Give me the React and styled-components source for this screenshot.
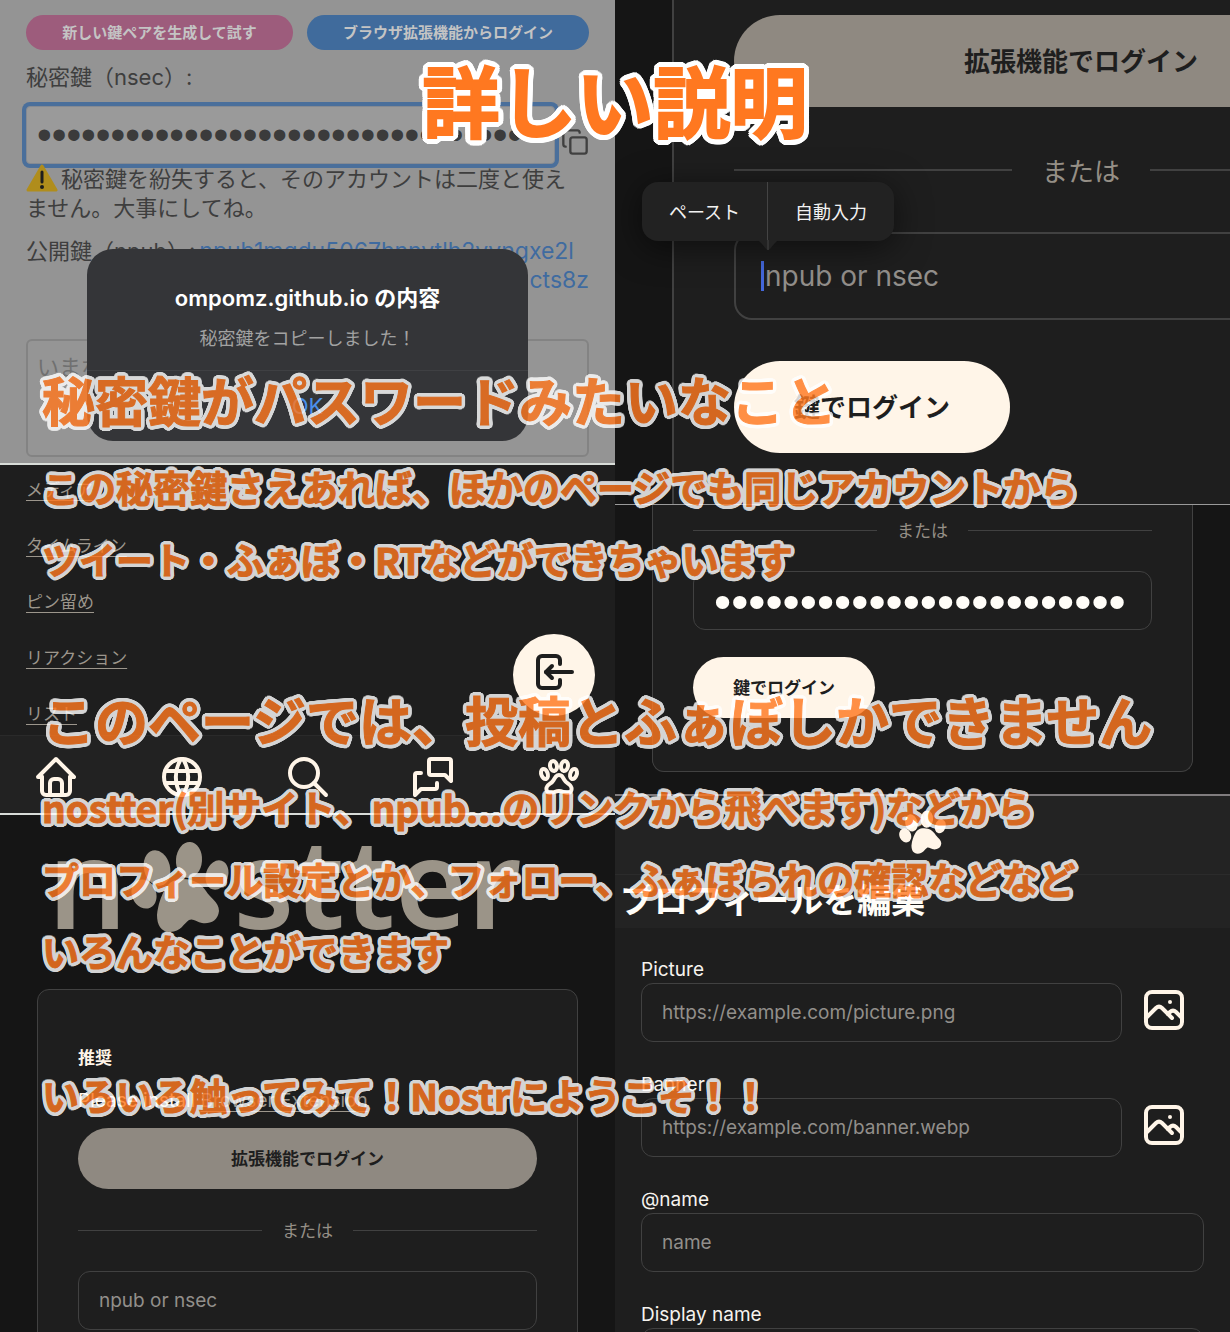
import React from "react";
import styled, { createGlobalStyle, css } from "styled-components";
import { Copy } from "lucide-react";
import { TbHome, TbWorld, TbSearch, TbMessages, TbPaw, TbLogin, TbPhoto } from "react-icons/tb";

const jp = `"Noto Sans CJK JP", sans-serif`;
const ui = `Inter, "Noto Sans CJK JP", sans-serif`;
const cream = "#fff5e8";
const ink = "#1e1e1e";
const line = "#414141";

/* White outline with rounded corners: copies of the glyph set around a circle */
const outline = (radius) =>
  Array.from({ length: 24 }, (_, i) => {
    const a = (i * Math.PI) / 12;
    return `${(Math.cos(a) * radius).toFixed(2)}px ${(Math.sin(a) * radius).toFixed(2)}px 0 #fff`;
  }).join(", ");

const GlobalStyle = createGlobalStyle`
  *, *::before, *::after { box-sizing: border-box; }
  body { margin: 0; background: #151515; font-family: ${ui}; }
  button, input, textarea { font-family: inherit; margin: 0; }
  h1, h2, p { margin: 0; }
`;

const Page = styled.main`
  position: relative;
  display: grid;
  grid-template-columns: minmax(0, 1fr) minmax(0, 1fr);
  height: 100vh;
  overflow: hidden;
`;

const Column = styled.div`
  display: flex;
  flex-direction: column;
  min-height: 0;
`;

const Panel = styled.section`
  position: relative;
  flex: ${(p) => (p.$fill ? "1 1 0" : "none")};
  min-height: 0;
  overflow: hidden;
  background: ${(p) => p.$bg || "#151515"};
  border-bottom: ${(p) => (p.$rule ? `${p.$rule}px solid ${p.$ruleColor || "#d8dcd8"}` : 0)};
`;

/* Key generation screen */

const KeyBody = styled.div`
  display: flex;
  flex-direction: column;
  padding: 15px 26px 6px;
  color: #3e3e3e;
  font: 400 22px/29px ${ui};
`;

const ButtonRow = styled.div`
  display: flex;
  gap: 14px;
`;

const PillButton = styled.button`
  flex: ${(p) => p.$grow} 1 0;
  height: 35px;
  padding: 0 0 2px;
  border: 0;
  border-radius: 18px;
  background: ${(p) => p.$bg};
  color: #c4c4c4;
  font: 700 15px/20px ${jp};
  white-space: nowrap;
`;

const KeyLabel = styled.label`
  padding: 13px 0 14px;
`;

const KeyRow = styled.div`
  display: flex;
  align-items: flex-end;
  gap: 6px;
`;

const KeyInput = styled.input`
  flex: 1;
  min-width: 0;
  height: 58px;
  padding: 0 10px;
  border: 1px solid #858a92;
  border-radius: 4px;
  outline: 0;
  background: #9a9a9a;
  box-shadow: 0 0 0 4px #4a6f9b;
  color: #3b3b3b;
  font: 400 42px/50px "Liberation Sans", sans-serif;
`;

const IconButton = styled.button`
  display: flex;
  align-items: center;
  justify-content: center;
  padding: 0;
  border: 0;
  background: none;
  color: ${cream};
`;

const CopyButton = styled(IconButton)`
  padding-bottom: 8px;
  color: #404040;
`;

const Warning = styled.p`
  padding: 0 8px 14px 0;
`;

const WarnIcon = styled.svg`
  width: 32px;
  height: 28px;
  margin-right: 3px;
  vertical-align: -5px;
`;

const PubRow = styled.p`
  display: flex;
  gap: 4px;
  white-space: nowrap;
`;

const PubLink = styled.a`
  flex: 1;
  display: flex;
  flex-direction: column;
  color: #3f6ba0;
  font-size: 23px;
  text-decoration: none;
`;

const PubTail = styled.span`
  align-self: flex-end;
`;

const PostBox = styled.textarea`
  height: 118px;
  margin-top: 44px;
  padding: 10px 9px;
  border: 2px solid #838383;
  border-radius: 6px;
  background: #959595;
  resize: none;
  font: 400 22px/29px ${jp};
  &::placeholder { color: #707070; opacity: 1; }
`;

const Dialog = styled.div`
  position: absolute;
  left: 87px;
  right: 87px;
  top: 249px;
  height: 192px;
  display: flex;
  flex-direction: column;
  border-radius: 26px;
  background: #343538;
  text-align: center;
`;

const DialogTitle = styled.h2`
  padding: 34px 0 10px;
  color: #fff;
  font: 600 22px/30px ${ui};
`;

const DialogText = styled.p`
  padding-bottom: 19px;
  color: #a2a2a2;
  font: 400 18px/28px ${jp};
`;

const DialogButton = styled.button`
  flex: 1;
  border: 0;
  border-top: 1px solid #3f4043;
  background: none;
  color: #4b8fea;
  font: 400 22px/30px ${ui};
`;

/* Profile menu screen */

const LinkList = styled.nav`
  display: flex;
  flex-direction: column;
  align-items: flex-start;
  gap: 30px;
  height: 270px;
  padding: 11px 26px 0;
`;

const MenuLink = styled.a`
  flex: none;
  color: #9c968c;
  font: 400 17px/26px ${jp};
  text-decoration: underline;
  text-decoration-thickness: 1px;
  text-underline-offset: 4px;
`;

const TabBar = styled.nav`
  display: flex;
  justify-content: space-between;
  align-items: center;
  height: 78px;
  padding: 4px 32px 0;
  border-top: 1px solid #2a2a2a;
  background: #222;
`;

const LoginFab = styled.button`
  position: absolute;
  right: 20px;
  bottom: 97px;
  width: 82px;
  height: 82px;
  display: flex;
  align-items: center;
  justify-content: center;
  padding: 0 0 6px;
  border: 0;
  border-radius: 50%;
  background: ${cream};
  color: ${ink};
`;

/* Login screens: "lg" is the zoomed-in view of the same card */

const Logo = styled.div`
  display: flex;
  align-items: flex-end;
  height: 120px;
  padding-left: 48px;
  color: #9b9488;
  font: 600 124px/108px "Noto Sans", sans-serif;
`;

const LogoPaw = styled.svg`
  width: 104px;
  height: 94px;
  margin-left: 2px;
`;

const LoginSpace = styled.div`
  padding: ${(p) => (p.$tail ? "0 0 22px" : "54px 0 0")};
`;

const Card = styled.div`
  display: flex;
  flex-direction: column;
  align-items: stretch;
  background: ${ink};
  border: 1px solid ${line};
  ${(p) =>
    p.$size === "lg"
      ? css`
          width: 133%;
          margin-left: 57px;
          padding: 15px 60px 51px;
          border-width: 0 2px;
        `
      : css`
          margin: 0 37px;
          padding: ${p.$open ? "5px 40px 53px" : "53px 40px"};
          border-radius: ${p.$open ? "0 0 12px 12px" : "12px"};
          border-top-width: ${p.$open ? 0 : "1px"};
        `}
`;

const CardHeading = styled.h2`
  color: ${cream};
  font: 700 17px/28px ${jp};
`;

const CardHint = styled.p`
  padding: 16px 0 13px;
  color: ${cream};
  font: 400 19px/28px ${ui};
  white-space: nowrap;
`;

const HintLink = styled.a`
  color: #9c968c;
  text-underline-offset: 4px;
`;

const CardButton = styled.button`
  height: ${(p) => (p.$size === "lg" ? 92 : 61)}px;
  padding: 0 ${(p) => (p.$size === "lg" ? 60 : 40)}px 2px;
  align-self: ${(p) => (p.$wide ? "stretch" : "flex-start")};
  border: 0;
  border-radius: 46px;
  background: ${(p) => (p.$wide ? "#8f8981" : cream)};
  color: ${ink};
  font: 700 ${(p) => (p.$size === "lg" ? "26px/40px" : "17px/26px")} ${jp};
`;

const Divider = styled.div`
  display: flex;
  align-items: center;
  gap: ${(p) => (p.$size === "lg" ? 30 : 20)}px;
  height: ${(p) => (p.$size === "lg" ? 125 : p.$short ? 40 : 82)}px;
  margin-bottom: ${(p) => (p.$short ? 21 : 0)}px;
  color: #958f86;
  font: 400 ${(p) => (p.$size === "lg" ? "26px/40px" : "17px/26px")} ${jp};
  &::before, &::after {
    content: "";
    flex: 1;
    height: ${(p) => (p.$size === "lg" ? 2 : 1)}px;
    background: ${line};
  }
`;

const FieldBox = styled.div`
  position: relative;
  display: flex;
  flex: ${(p) => (p.$grow ? 1 : "none")};
  margin-bottom: ${(p) => (p.$grow ? 0 : p.$size === "lg" ? 41 : 27)}px;
`;

const TextInput = styled.input`
  flex: 1;
  min-width: 0;
  height: ${(p) => (p.$size === "lg" ? 88 : 59)}px;
  padding: 0 ${(p) => (p.$size === "lg" ? 29 : 20)}px;
  border: ${(p) => (p.$size === "lg" ? 2 : 1)}px solid ${line};
  border-radius: ${(p) => (p.$size === "lg" ? 18 : 12)}px;
  outline: 0;
  background: ${ink};
  color: #fffdf8;
  font: 400 ${(p) => (p.$size === "lg" ? "28px/40px" : "19px/28px")} ${ui};
  &[type="password"] { font: 400 49px/56px "Liberation Sans", sans-serif; }
  &::placeholder { color: #928f8b; opacity: 1; }
`;

const Caret = styled.span`
  position: absolute;
  left: 27px;
  top: 29px;
  width: 3px;
  height: 30px;
  background: #4468dc;
`;

const EditMenu = styled.div`
  position: absolute;
  left: 27px;
  top: 182px;
  display: flex;
  height: 59px;
  border-radius: 16px;
  background: #222;
  box-shadow: 0 6px 34px rgba(0, 0, 0, 0.55);
`;

const EditItem = styled.button`
  padding: 0 27px 2px;
  border: 0;
  background: none;
  color: #f2f2f2;
  font: 400 18px/28px ${jp};
  & + & { border-left: 1px solid #444; }
`;

const EditTip = styled.svg`
  position: absolute;
  left: 114px;
  top: 58px;
  width: 24px;
  height: 11px;
`;

/* Profile editing screen */

const TopBar = styled.header`
  display: flex;
  justify-content: center;
  height: 79px;
  padding-top: 13px;
  border-bottom: 1px solid #2b2b2b;
  background: #232323;
`;

const TopPaw = styled.svg`
  width: 50px;
  height: 47px;
`;

const EditTitle = styled.h2`
  height: 53px;
  padding-left: 5px;
  background: #232323;
  color: #fffdf8;
  font: 700 34px/48px ${jp};
  white-space: nowrap;
`;

const Form = styled.form`
  display: flex;
  flex-direction: column;
  gap: 29px;
  padding: 28px 26px 0;
`;

const Field = styled.div`
  display: flex;
  flex-direction: column;
`;

const FieldLabel = styled.label`
  color: #f6f3ee;
  font: 400 19px/27px ${ui};
`;

const FieldRow = styled.div`
  display: flex;
  gap: 18px;
`;

const PhotoButton = styled(IconButton)`
  width: 48px;
  height: 54px;
  margin-right: 16px;
`;

/* Caption layer laid over the collage */

const Overlay = styled.div`
  position: absolute;
  inset: 0;
  padding: 24px 42px 0;
  color: #ff7820;
  font-family: ${jp};
  font-weight: 700;
  white-space: nowrap;
  pointer-events: none;
  -webkit-text-stroke-color: #ff7820;
`;

const Title = styled.h1`
  font-size: 77px;
  line-height: 150px;
  text-align: center;
  -webkit-text-stroke-width: 2px;
  text-shadow: ${outline(6)}, ${outline(3)};
`;

const Captions = styled.div`
  padding-top: 173px;
  opacity: 0.81;
`;

const Caption = styled.p`
  margin-top: ${(p) => (p.$gap ? 72 : 0)}px;
  font-size: ${(p) => (p.$big ? 53 : 37)}px;
  line-height: ${(p) => (p.$big ? 104 : 72)}px;
  -webkit-text-stroke-width: 1px;
  text-shadow: ${outline(4)}, ${outline(2)};
`;

function PawShape() {
  return (
    <g fill="currentColor">
      <ellipse cx="28" cy="27" rx="13" ry="18" transform="rotate(-14 28 27)" />
      <ellipse cx="60" cy="19" rx="13" ry="18" transform="rotate(4 60 19)" />
      <ellipse cx="88" cy="34" rx="11" ry="15" transform="rotate(18 88 34)" />
      <ellipse cx="15" cy="53" rx="12" ry="15" transform="rotate(-24 15 53)" />
      <path d="M54 38C66 38 73 44 77 50C81 57 90 61 90 70C89 80 81 83 73 82C68 81 64 77 60 79C55 82 52 91 41 91C32 91 28 84 28 74C29 64 32 56 35 50C39 42 44 38 54 38Z" />
    </g>
  );
}

const captions = [
  { text: "秘密鍵がパスワードみたいなこと", big: true },
  { text: "この秘密鍵さえあれば、ほかのページでも同じアカウントから" },
  { text: "ツイート・ふぁぼ・RTなどができちゃいます" },
  { text: "このページでは、投稿とふぁぼしかできません", big: true, gap: true },
  { text: "nostter(別サイト、npub...のリンクから飛べます)などから" },
  { text: "プロフィール設定とか、フォロー、ふぁぼられの確認などなど" },
  { text: "いろんなことができます" },
  { text: "いろいろ触ってみて！Nostrにようこそ！！", gap: true },
];

const menu = ["メディア", "タイムライン", "ピン留め", "リアクション", "リスト"];

const tabs = [
  ["ホーム", TbHome],
  ["グローバル", TbWorld],
  ["検索", TbSearch],
  ["メッセージ", TbMessages],
  ["通知", TbPaw],
];

const fields = [
  { id: "picture", label: "Picture", hint: "https://example.com/picture.png", photo: true },
  { id: "banner", label: "Banner", hint: "https://example.com/banner.webp", photo: true },
  { id: "name", label: "@name", hint: "name" },
  { id: "display", label: "Display name", hint: "" },
];

export default function App() {
  return (
    <>
      <GlobalStyle />
      <Page>
        <Column>
          <Panel $bg="#949494" $rule={2}>
            <KeyBody>
              <ButtonRow>
                <PillButton type="button" $grow={267} $bg="#9d5c7c">新しい鍵ペアを生成して試す</PillButton>
                <PillButton type="button" $grow={282} $bg="#406b9c">ブラウザ拡張機能からログイン</PillButton>
              </ButtonRow>
              <KeyLabel htmlFor="nsec">秘密鍵（nsec）:</KeyLabel>
              <KeyRow>
                <KeyInput id="nsec" type="password" readOnly value={"x".repeat(34)} />
                <CopyButton type="button" aria-label="コピー">
                  <Copy size={28} strokeWidth={2} />
                </CopyButton>
              </KeyRow>
              <Warning>
                <WarnIcon viewBox="0 0 32 28" aria-hidden="true">
                  <path d="M16 2L30 26H2Z" fill="#b08d1c" stroke="#b08d1c" strokeWidth="3" strokeLinejoin="round" />
                  <path d="M16 8V18" stroke="#1d1d1d" strokeWidth="3" strokeLinecap="round" />
                  <circle cx="16" cy="23" r="2" fill="#1d1d1d" />
                </WarnIcon>
                秘密鍵を紛失すると、そのアカウントは二度と使えません。大事にしてね。
              </Warning>
              <PubRow>
                <span>公開鍵（npub）:</span>
                <PubLink href="#npub">
                  <span>npub1mqdu5067hnnytlh2yyngxe2l</span>
                  <PubTail>cts8z</PubTail>
                </PubLink>
              </PubRow>
              <PostBox aria-label="投稿" placeholder="いまなにしてる？" />
            </KeyBody>
            <Dialog role="dialog" aria-labelledby="dialog-title">
              <DialogTitle id="dialog-title">ompomz.github.io の内容</DialogTitle>
              <DialogText>秘密鍵をコピーしました！</DialogText>
              <DialogButton type="button">OK</DialogButton>
            </Dialog>
          </Panel>

          <Panel $bg={ink} $rule={2}>
            <LinkList>
              {menu.map((t) => (
                <MenuLink key={t} href="#menu">{t}</MenuLink>
              ))}
            </LinkList>
            <TabBar>
              {tabs.map(([name, Icon]) => (
                <IconButton key={name} type="button" aria-label={name}>
                  <Icon size={48} />
                </IconButton>
              ))}
            </TabBar>
            <LoginFab type="button" aria-label="ログイン">
              <TbLogin size={48} />
            </LoginFab>
          </Panel>

          <Panel $fill>
            <Logo>
              <span>n</span>
              <LogoPaw viewBox="0 0 104 94" role="img" aria-label="o">
                <PawShape />
              </LogoPaw>
              <span>stter</span>
            </Logo>
            <LoginSpace>
              <Card>
                <CardHeading>推奨</CardHeading>
                <CardHint>
                  Please install <HintLink href="#extension">Browser Extension</HintLink>
                </CardHint>
                <CardButton type="button" $wide>拡張機能でログイン</CardButton>
                <Divider>または</Divider>
                <FieldBox>
                  <TextInput aria-label="npub or nsec" placeholder="npub or nsec" />
                </FieldBox>
              </Card>
            </LoginSpace>
          </Panel>
        </Column>

        <Column>
          <Panel $rule={1} $ruleColor="#9a9a9a">
            <Card $size="lg">
              <CardButton type="button" $size="lg" $wide>拡張機能でログイン</CardButton>
              <Divider $size="lg">または</Divider>
              <FieldBox $size="lg">
                <TextInput $size="lg" aria-label="npub or nsec" placeholder="npub or nsec" />
                <Caret />
              </FieldBox>
              <CardButton type="button" $size="lg">鍵でログイン</CardButton>
            </Card>
            <EditMenu>
              <EditItem type="button">ペースト</EditItem>
              <EditItem type="button">自動入力</EditItem>
              <EditTip viewBox="0 0 24 11" aria-hidden="true">
                <path d="M0 0C5 0 9 10 12 10S19 0 24 0Z" fill="#222" />
                <path d="M12 0V10" stroke="#444" />
              </EditTip>
            </EditMenu>
          </Panel>

          <Panel $rule={2} $ruleColor="#807c7e">
            <LoginSpace $tail>
              <Card $open>
                <Divider $short>または</Divider>
                <FieldBox>
                  <TextInput type="password" aria-label="nsec" readOnly value={"x".repeat(24)} />
                </FieldBox>
                <CardButton type="button">鍵でログイン</CardButton>
              </Card>
            </LoginSpace>
          </Panel>

          <Panel $fill $bg={ink}>
            <TopBar>
              <TopPaw viewBox="0 0 104 94" role="img" aria-label="nostter" color={cream}>
                <PawShape />
              </TopPaw>
            </TopBar>
            <EditTitle>プロフィールを編集</EditTitle>
            <Form>
              {fields.map((f) => (
                <Field key={f.id}>
                  <FieldLabel htmlFor={f.id}>{f.label}</FieldLabel>
                  <FieldRow>
                    <FieldBox $grow>
                      <TextInput id={f.id} placeholder={f.hint} />
                    </FieldBox>
                    {f.photo && (
                      <PhotoButton type="button" aria-label={`${f.label} upload`}>
                        <TbPhoto size={48} />
                      </PhotoButton>
                    )}
                  </FieldRow>
                </Field>
              ))}
            </Form>
          </Panel>
        </Column>

        <Overlay>
          <Title>詳しい説明</Title>
          <Captions>
            {captions.map((c) => (
              <Caption key={c.text} $big={c.big} $gap={c.gap}>{c.text}</Caption>
            ))}
          </Captions>
        </Overlay>
      </Page>
    </>
  );
}
